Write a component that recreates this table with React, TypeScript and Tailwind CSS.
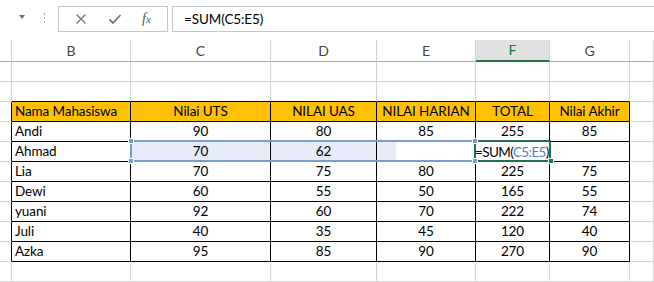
import React from "react";

const cols = ["", "B", "C", "D", "E", "F", "G", ""];
const header = ["Nama Mahasiswa", "Nilai UTS", "NILAI UAS", "NILAI HARIAN", "TOTAL", "Nilai Akhir"];
const data: (string | number)[][] = [
  ["Andi", 90, 80, 85, 255, 85],
  ["Ahmad", 70, 62, "", "", ""],
  ["Lia", 70, 75, 80, 225, 75],
  ["Dewi", 60, 55, 50, 165, 55],
  ["yuani", 92, 60, 70, 222, 74],
  ["Juli", 40, 35, 45, 120, 40],
  ["Azka", 95, 85, 90, 270, 90],
];

const font = { fontFamily: "Lato, 'Liberation Sans', sans-serif" };

function Cell({ r, c }: { r: number; c: number }) {
  const inTableCol = c >= 1 && c <= 6;
  const bottomBlack = inTableCol && r >= 1 && r <= 9;
  const rightBlack = c <= 6 && r >= 2 && r <= 9;
  const isHeader = r === 2 && inTableCol;
  const row = r >= 3 && r <= 9 ? data[r - 3] : null;
  const selected = r === 4 && (c === 2 || c === 3);

  let text: React.ReactNode = null;
  let align = "justify-center";
  if (isHeader) {
    text = header[c - 1];
    if (c === 1) align = "justify-start pl-[3px]";
  } else if (row && inTableCol) {
    text = row[c - 1];
    if (c === 1) align = "justify-start pl-[3px]";
  }

  return (
    <div
      className={[
        "relative flex items-center h-5 border-r border-b text-[13.5px] tracking-[-0.1px] leading-none text-black whitespace-nowrap",
        align,
        bottomBlack ? "border-b-black" : "border-b-[#d4d4d4]",
        rightBlack ? "border-r-black" : "border-r-[#d4d4d4]",
        isHeader ? "bg-[#ffc000]" : selected ? "bg-[#e6ebf7]" : "bg-white",
      ].join(" ")}
    >
      {r === 4 && c === 4 && <div className="absolute left-0 top-0 bottom-0 w-[19px] bg-[#e6ebf7]" />}
      {r === 4 && c === 5 && (
        <span className="absolute -left-px top-[4px] z-10 tracking-[-0.6px]">
          =SUM(<span className="text-[#5b7fc6]">C5:E5</span>)
        </span>
      )}
      <span className="relative pt-px">{text}</span>
    </div>
  );
}

export default function App() {
  return (
    <div className="relative w-[654px] h-[282px] overflow-hidden bg-white" style={font}>
      {/* formula bar */}
      <div className="flex h-8 pt-[6px] items-stretch">
        <div className="w-[36px] flex items-center justify-end pr-[11px] pb-[4px]">
          <span className="block w-0 h-0 border-l-[3px] border-r-[3px] border-t-[4px] border-l-transparent border-r-transparent border-t-[#6d6d6d]" />
        </div>
        <div className="w-[22px] flex flex-col items-center justify-center gap-[2px] pr-[6px] pb-[2px]">
          <span className="w-px h-[2px] bg-[#a0a0a0]" />
          <span className="w-px h-[2px] bg-[#a0a0a0]" />
          <span className="w-px h-[2px] bg-[#a0a0a0]" />
        </div>
        <div className="w-[110px] border border-[#c6c6c6] flex items-center justify-around px-[6px] text-[#777]">
          <svg width="12" height="12" viewBox="0 0 12 12">
            <path d="M1.5 1.5L10.5 10.5M10.5 1.5L1.5 10.5" stroke="#777" strokeWidth="1.3" />
          </svg>
          <svg width="14" height="12" viewBox="0 0 14 12">
            <path d="M1.5 6.5L5 10L12.5 2" stroke="#777" strokeWidth="1.8" fill="none" />
          </svg>
          <span className="italic text-[14px] text-[#555] pb-[1px]" style={{ fontFamily: "'Liberation Serif', serif" }}>
            f<span className="text-[11px]">x</span>
          </span>
        </div>
        <div className="ml-[4px] flex-1 border border-[#c6c6c6] border-r-0 flex items-center pl-[11px] text-[13.5px] tracking-[-0.1px] text-black">
          =SUM(C5:E5)
        </div>
      </div>

      {/* sheet */}
      <div className="mt-2 grid grid-cols-[12px_119px_140px_106px_99px_74px_80px_1fr]">
        {cols.map((c, i) => (
          <div
            key={i}
            className={[
              "h-[22px] flex items-center justify-center text-[14px] leading-none",
              i === 5
                ? "bg-[#e1e1e1] text-[#217346] border-b-2 border-b-[#217346] border-r border-r-[#d4d4d4]"
                : "text-[#444] border-b border-b-[#ababab] border-r border-r-[#d4d4d4]",
            ].join(" ")}
          >
            {c}
          </div>
        ))}
        {Array.from({ length: 11 }).map((_, r) =>
          cols.map((_, c) => <Cell key={r + "-" + c} r={r} c={c} />)
        )}
      </div>

      {/* selection overlay */}
      <div className="absolute left-[130px] top-[140px] w-[346px] h-[22px] border-2 border-[#7b9bd3] pointer-events-none" />
      <div className="absolute left-[474px] top-[140px] w-[77px] h-[22px] border-2 border-[#217346] pointer-events-none" />
      <div className="absolute left-[128px] top-[138px] w-[6px] h-[6px] bg-[#7b9bd3] border border-white" />
      <div className="absolute left-[128px] top-[158px] w-[6px] h-[6px] bg-[#7b9bd3] border border-white" />
      <div className="absolute left-[472px] top-[138px] w-[6px] h-[6px] bg-[#7b9bd3] border border-white" />
      <div className="absolute left-[472px] top-[158px] w-[6px] h-[6px] bg-[#7b9bd3] border border-white" />
      <div className="absolute left-[548px] top-[158px] w-[6px] h-[6px] bg-[#217346] border border-white" />
    </div>
  );
}
